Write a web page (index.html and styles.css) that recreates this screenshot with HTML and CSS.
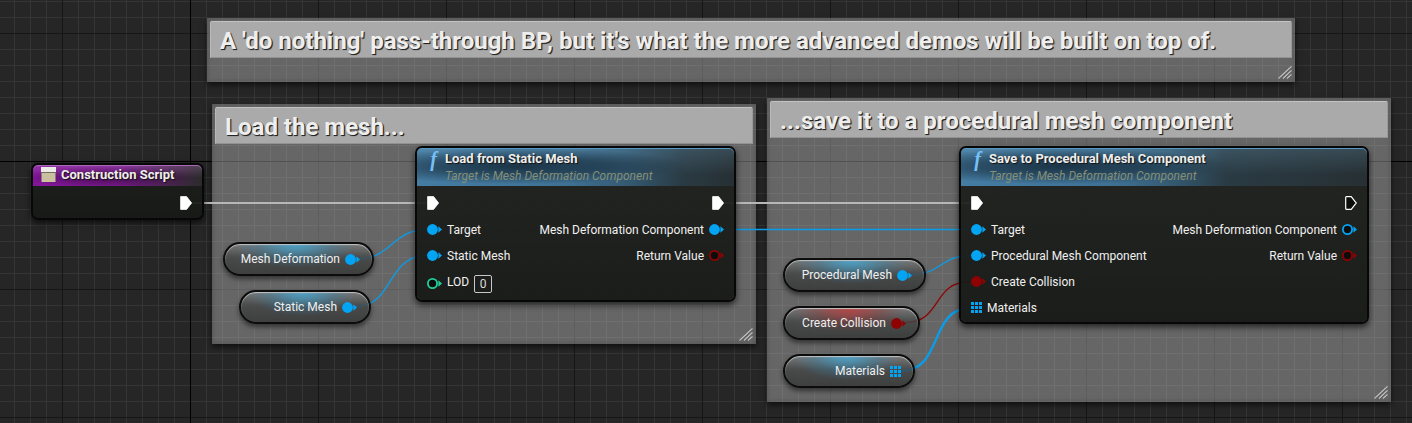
FILE: index.html
```html
<!DOCTYPE html>
<html lang="en">
<head>
<meta charset="utf-8">
<title>Construction Script</title>
<link rel="stylesheet" href="styles.css">
</head>
<body>
<svg class="defs" aria-hidden="true">
  <defs>
    <symbol id="pin" viewBox="0 0 15 12"><circle cx="5.5" cy="6.5" r="5.4" fill="currentColor"/><path d="M11.4 3.2L15 6.5L11.4 9.8Z" fill="currentColor"/></symbol>
    <symbol id="pin-open" viewBox="0 0 15 12"><circle cx="5.5" cy="6.5" r="4.6" fill="#0b0d0c" stroke="currentColor" stroke-width="1.8"/><path d="M11.4 3.2L15 6.5L11.4 9.8Z" fill="currentColor"/></symbol>
    <symbol id="exec" viewBox="0 0 12 14"><path d="M0.6 0.6H6.6L11.6 7L6.6 13.4H0.6Z" fill="#fff" stroke="#fff" stroke-width=".8" stroke-linejoin="round"/></symbol>
    <symbol id="exec-open" viewBox="0 0 12 14"><path d="M0.7 1.4Q0.7 0.7 1.4 0.7H6.2L11.3 7L6.2 13.3H1.4Q0.7 13.3 0.7 12.6Z" fill="#0b0d0c" stroke="#fff" stroke-width="1.2"/></symbol>
    <symbol id="array" viewBox="0 0 11 11"><path d="M0 0h3v3H0zM4 0h3v3H4zM8 0h3v3H8zM0 4h3v3H0zM4 4h3v3H4zM8 4h3v3H8zM0 8h3v3H0zM4 8h3v3H4zM8 8h3v3H8z" fill="currentColor"/></symbol>
    <symbol id="grip" viewBox="0 0 14 13"><path d="M.5 12.5L13.5 .5M5 12.5L13.5 4.5M9 12.5L13.5 8.5" stroke="#333" stroke-width="1" transform="translate(0 1)" opacity=".5"/><path d="M.5 12.5L13.5 .5M5 12.5L13.5 4.5M9 12.5L13.5 8.5" stroke="#c4c4c4" stroke-width="1.1"/></symbol>
  </defs>
</svg>
<main class="graph">
  <section class="comment comment-intro">
    <h2 class="comment-title">A 'do nothing' pass-through BP, but it's what the more advanced demos will be built on top of.</h2>
    <svg class="grip"><use href="#grip"/></svg>
  </section>
  <section class="comment comment-load">
    <h2 class="comment-title">Load the mesh...</h2>
    <svg class="grip"><use href="#grip"/></svg>
  </section>
  <section class="comment comment-save">
    <h2 class="comment-title">...save it to a procedural mesh component</h2>
    <svg class="grip"><use href="#grip"/></svg>
  </section>

  <svg class="wires" aria-hidden="true">
    <path class="wire wire-exec" d="M190 203H428"/>
    <path class="wire wire-exec" d="M722 203H972"/>
    <path class="wire wire-object" d="M724 229.5H972"/>
    <path class="wire wire-object" d="M359 258.5C392 258.5 392 229.5 427 229.5"/>
    <path class="wire wire-object" d="M356 306.5C394 306.5 386 255.5 427 255.5"/>
    <path class="wire wire-object" d="M911 274.5C941 274.5 941 255.5 971 255.5"/>
    <path class="wire wire-bool" d="M905 322.5C943 322.5 931 281.5 971 281.5"/>
    <path class="wire wire-array" d="M901 371C944 371 928 308 971 308"/>
  </svg>

  <article class="node node-event">
    <header class="node-head"><svg class="event-icon" viewBox="0 0 15 15"><path d="M0 0h15v5H0z" fill="#ecebe6"/><path d="M0 5h15v1H0z" fill="#756a63"/><path d="M0.5 6h14v9h-14z" fill="#c9c09e"/></svg><h3 class="node-title">Construction Script</h3></header>
    <div class="node-body">
      <ul class="pins pins-out"><li class="row"><svg class="exec"><use href="#exec"/></svg></li></ul>
    </div>
  </article>

  <article class="node node-load">
    <header class="node-head"><span class="fn">f</span><div><h3 class="node-title">Load from Static Mesh</h3><p class="node-sub">Target is Mesh Deformation Component</p></div></header>
    <div class="node-body">
      <ul class="pins">
        <li class="row"><svg class="exec"><use href="#exec"/></svg></li>
        <li class="row"><svg class="pin object"><use href="#pin"/></svg>Target</li>
        <li class="row"><svg class="pin object"><use href="#pin"/></svg>Static Mesh</li>
        <li class="row row-input"><svg class="pin int"><use href="#pin-open"/></svg><label for="lod">LOD</label><input class="value" id="lod" type="text" value="0"></li>
      </ul>
      <ul class="pins pins-out">
        <li class="row"><svg class="exec"><use href="#exec"/></svg></li>
        <li class="row">Mesh Deformation Component<svg class="pin object"><use href="#pin"/></svg></li>
        <li class="row">Return Value<svg class="pin bool"><use href="#pin-open"/></svg></li>
      </ul>
    </div>
  </article>

  <article class="node node-save">
    <header class="node-head"><span class="fn">f</span><div><h3 class="node-title">Save to Procedural Mesh Component</h3><p class="node-sub">Target is Mesh Deformation Component</p></div></header>
    <div class="node-body">
      <ul class="pins">
        <li class="row"><svg class="exec"><use href="#exec"/></svg></li>
        <li class="row"><svg class="pin object"><use href="#pin"/></svg>Target</li>
        <li class="row"><svg class="pin object"><use href="#pin"/></svg>Procedural Mesh Component</li>
        <li class="row"><svg class="pin bool"><use href="#pin"/></svg>Create Collision</li>
        <li class="row"><svg class="array object"><use href="#array"/></svg>Materials</li>
      </ul>
      <ul class="pins pins-out">
        <li class="row"><svg class="exec"><use href="#exec-open"/></svg></li>
        <li class="row">Mesh Deformation Component<svg class="pin object"><use href="#pin-open"/></svg></li>
        <li class="row">Return Value<svg class="pin bool"><use href="#pin-open"/></svg></li>
      </ul>
    </div>
  </article>

  <div class="var var-deformation">Mesh Deformation<svg class="pin object"><use href="#pin"/></svg></div>
  <div class="var var-static">Static Mesh<svg class="pin object"><use href="#pin"/></svg></div>
  <div class="var var-procedural">Procedural Mesh<svg class="pin object"><use href="#pin"/></svg></div>
  <div class="var var-bool var-collision">Create Collision<svg class="pin bool"><use href="#pin"/></svg></div>
  <div class="var var-materials">Materials<svg class="array object"><use href="#array"/></svg></div>
</main>
</body>
</html>
```

FILE: styles.css
```css
* { box-sizing: border-box; }
body { margin: 0; background: #262626; font: 12px/16px Roboto, sans-serif; color: #f0f0f0; }
h2, h3, p, ul { margin: 0; padding: 0; }
ul { list-style: none; }
svg { display: block; flex: none; }
.defs { position: absolute; width: 0; height: 0; }

.graph {
  position: relative;
  min-height: 100vh;
  overflow: hidden;
  background:
    linear-gradient(#000, #000) 190px 0 / 1px 100% no-repeat,
    linear-gradient(#000, #000) 0 161px / 100% 1px no-repeat,
    linear-gradient(90deg, #161616 1px, transparent 1px) 62px 0 / 128px 128px,
    linear-gradient(#161616 1px, transparent 1px) 0 33px / 128px 128px,
    linear-gradient(90deg, #353535 1px, transparent 1px) 14px 0 / 16px 16px,
    linear-gradient(#353535 1px, transparent 1px) 0 1px / 16px 16px,
    #262626;
}

/* Comment boxes */
.comment {
  position: absolute;
  display: flex;
  flex-direction: column;
  justify-content: space-between;
  padding: 3px;
  background: rgba(182, 182, 182, .45);
  box-shadow: 0 3px 6px rgba(0, 0, 0, .6), inset 0 0 5px rgba(60, 60, 60, .5);
}
.comment-title {
  height: 37px;
  padding: 0 9px;
  background: #aaa;
  border: 1px solid #b8b8b8;
  border-color: #c2c2c2 #9a9a9a #929292 #b8b8b8;
  border-radius: 2px 2px 0 0;
  font-size: 24px;
  line-height: 38px;
  font-weight: 700;
  color: #eee;
  text-shadow: 1px 1px 1px #222, 1px 1px 0 #444;
  white-space: nowrap;
}
.grip { width: 14px; height: 13px; align-self: flex-end; }
.comment-intro { left: 207px; top: 18px; width: 1088px; height: 64px; }
.comment-load { left: 212px; top: 104px; width: 544px; height: 240px; }
.comment-save { left: 767px; top: 98px; width: 624px; height: 304px; }

/* Wires */
.wires { position: absolute; inset: 0; width: 100%; height: 100%; }
.wire { fill: none; }
.wire-exec { stroke: #b8b6b6; stroke-width: 2; }
.wire-object { stroke: #0c9ce6; stroke-width: 1.4; }
.wire-bool { stroke: #8d0808; stroke-width: 1.4; }
.wire-array { stroke: #0c9ce6; stroke-width: 2.4; }

/* Nodes */
.node {
  position: absolute;
  background: linear-gradient(rgba(29, 31, 28, .91), rgba(23, 25, 22, .95)) padding-box;
  border: 2px solid #070707;
  border-radius: 7px;
  box-shadow: 0 3px 6px rgba(0, 0, 0, .65);
}
.node-head {
  display: flex;
  gap: 5px;
  height: 38px;
  padding: 3px 11px 0 10px;
  border-radius: 5px 5px 0 0;
  background:
    radial-gradient(ellipse 170px 18px at 100px 18px, rgba(14, 30, 42, .75), rgba(14, 30, 42, .5) 50%, transparent),
    linear-gradient(rgba(120, 170, 200, .22), transparent 70%),
    linear-gradient(90deg, #457ca2, #3f7194 150px, #345a73 210px, #2a3b44 265px, #273034 100%);
  box-shadow: inset 0 1px 0 #5698c2;
}
.node-title { font-size: 13px; line-height: 16px; font-weight: 700; color: #eee; text-shadow: 1px 1px 1px #111; white-space: nowrap; }
.node-sub { margin-top: 1px; font-style: italic; color: #868f76; white-space: nowrap; }
.fn { width: 13px; font: italic bold 20px/16px "Liberation Serif", serif; color: #76c0f8; text-align: center; }
.node-body { display: flex; justify-content: space-between; padding: 4px 10px 2px; }
.pins-out { margin-left: auto; }
.row { display: flex; align-items: center; gap: 5px; height: 26px; padding-top: 2px; white-space: nowrap; }
.row .pin, .row .exec { margin-bottom: 2px; }
.row .array { margin-bottom: 1px; }
.pins-out .row { justify-content: flex-end; }
.row-input { height: 30px; }
.row-input label { padding-bottom: 4px; }
.value { width: 18px; height: 18px; padding: 0; background: transparent; border: 1px solid #c8c8c8; border-radius: 2px; color: #ddd; font: inherit; text-align: center; }
.pin { width: 15px; height: 12px; }
.exec { width: 12px; height: 14px; }
.array { width: 11px; height: 11px; }
.object { color: #04a4f4; }
.bool { color: #8e0202; }
.int { color: #20cf9a; }

.node-event { left: 31px; top: 163px; width: 173px; }
.node-event .node-head {
  height: 21px;
  padding: 2px 8px;
  background:
    radial-gradient(ellipse 90px 11px at 75px 12px, rgba(35, 5, 40, .6), transparent),
    linear-gradient(rgba(200, 150, 210, .25), transparent 60%),
    linear-gradient(90deg, #83159a, #7c1a91 50%, #4a2351 80%, #2b2b2b);
  box-shadow: inset 0 1px 0 #a868b6;
}
.node-event .event-icon { width: 15px; height: 15px; }
.node-load { left: 415px; top: 146px; width: 321px; }
.node-save { left: 959px; top: 146px; width: 410px; }

/* Variable getters */
.var {
  position: absolute;
  display: flex;
  align-items: center;
  justify-content: flex-end;
  gap: 5px;
  height: 34px;
  padding-right: 12px;
  border: 2px solid #0c0c0c;
  border-radius: 17px;
  background:
    radial-gradient(ellipse 42% 80% at 48% 0, rgba(70, 170, 215, .85), rgba(55, 140, 180, .35) 60%, transparent) padding-box,
    linear-gradient(rgba(125, 125, 125, .8), rgba(66, 68, 68, .8) 45%, rgba(54, 55, 55, .85)) padding-box;
  box-shadow: 0 3px 5px rgba(0, 0, 0, .5), inset 0 1px 1px #c4c4c4;
  white-space: nowrap;
}
.var-bool {
  background:
    radial-gradient(ellipse 42% 80% at 48% 0, rgba(195, 60, 60, .85), rgba(150, 50, 50, .35) 60%, transparent) padding-box,
    linear-gradient(rgba(125, 125, 125, .8), rgba(66, 68, 68, .8) 45%, rgba(54, 55, 55, .85)) padding-box;
}
.var-deformation { left: 223px; top: 242px; width: 151px; }
.var-static { left: 239px; top: 290px; width: 132px; }
.var-procedural { left: 783px; top: 258px; width: 143px; }
.var-collision { left: 783px; top: 306px; width: 137px; }
.var-materials { left: 783px; top: 354px; width: 132px; }
```
